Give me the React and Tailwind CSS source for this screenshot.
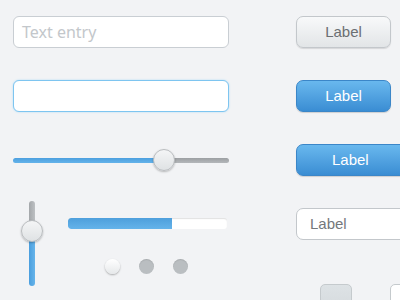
export default function App() {
  const font = { fontFamily: '"Liberation Sans", Arial, sans-serif' };
  return (
    <div className="w-[400px] h-[300px] overflow-hidden bg-[#f2f3f5] flex" style={font}>
      {/* Left column */}
      <div className="ml-[13px] w-[216px] shrink-0 flex flex-col">
        <div className="shrink-0 mt-[16px] h-[32px] rounded-[6px] border border-[#c9ced3] bg-white flex items-center pl-[8px] text-[16px] text-[#c3c7cb]" style={{ fontFamily: '"Noto Sans", "Liberation Sans", sans-serif' }}>
          Text entry
        </div>
        <div className="shrink-0 mt-[32px] h-[32px] rounded-[6px] border border-[#7ec5f0] bg-white shadow-[0_0_2px_#a9d9f7]"></div>
        {/* horizontal slider */}
        <div className="shrink-0 mt-[37px] h-[22px] relative flex items-center">
          <div className="flex w-full h-[5px] rounded-full overflow-hidden">
            <div className="w-[151px] bg-gradient-to-b from-[#4c9fdf] to-[#64b3ea]"></div>
            <div className="flex-1 bg-gradient-to-b from-[#9c9fa2] to-[#b4b7ba]"></div>
          </div>
          <div className="absolute left-[140px] top-0 w-[22px] h-[22px] rounded-full border border-[#b9bcbf] bg-gradient-to-b from-[#f4f5f6] to-[#dfe2e4] shadow-[0_1px_2px_rgba(0,0,0,0.25)]"></div>
        </div>
        {/* bottom */}
        <div className="shrink-0 mt-[30px] flex">
          <div className="ml-[8px] w-[22px] h-[85px] relative flex flex-col items-center">
            <div className="w-[6px] h-[22px] rounded-t-full bg-gradient-to-r from-[#a4a7aa] to-[#bdc0c3]"></div>
            <div className="w-[6px] flex-1 rounded-b-full bg-gradient-to-r from-[#4a9ede] to-[#66b4ea]"></div>
            <div className="absolute left-0 top-[19px] w-[22px] h-[22px] rounded-full border border-[#b9bcbf] bg-gradient-to-b from-[#f4f5f6] to-[#dfe2e4] shadow-[0_1px_2px_rgba(0,0,0,0.25)]"></div>
          </div>
          <div className="ml-[25px] flex-1 flex flex-col">
            <div className="mt-[17px] w-[159px] h-[11px] rounded-[3px] flex overflow-hidden bg-white shadow-[inset_0_1px_1px_rgba(0,0,0,0.12)]">
              <div className="w-[104px] bg-gradient-to-b from-[#4e9fdc] to-[#65b3ea] rounded-l-[3px]"></div>
            </div>
            <div className="mt-[30px] ml-[37px] flex gap-[19px]">
              <div className="w-[15px] h-[15px] rounded-full bg-gradient-to-b from-white to-[#e6e8ea] shadow-[0_1px_2px_rgba(0,0,0,0.3)]"></div>
              <div className="w-[15px] h-[15px] rounded-full bg-[#babec1] shadow-[inset_0_1px_1px_rgba(0,0,0,0.1)]"></div>
              <div className="w-[15px] h-[15px] rounded-full bg-[#babec1] shadow-[inset_0_1px_1px_rgba(0,0,0,0.1)]"></div>
            </div>
          </div>
        </div>
      </div>
      {/* Right column */}
      <div className="ml-[67px] flex flex-col shrink-0">
        <div className="shrink-0 mt-[16px] w-[95px] h-[32px] rounded-[7px] border border-[#c3c7cb] bg-gradient-to-b from-[#f8f9fa] to-[#e2e5e7] shadow-[0_1px_1px_rgba(0,0,0,0.12)] flex items-center justify-center text-[15px] text-[#6b6f73]">
          Label
        </div>
        <div className="shrink-0 mt-[32px] w-[95px] h-[32px] rounded-[7px] border border-[#3b86c8] bg-gradient-to-b from-[#69b8ee] to-[#3a8dd3] shadow-[0_1px_1px_rgba(0,0,0,0.15)] flex items-center justify-center text-[15px] text-white">
          Label
        </div>
        <div className="shrink-0 mt-[32px] w-[120px] h-[32px] rounded-[7px] border border-[#3b86c8] bg-gradient-to-b from-[#69b8ee] to-[#3a8dd3] shadow-[0_1px_1px_rgba(0,0,0,0.15)] flex items-center pl-[35px] text-[15px] text-white">
          Label
        </div>
        <div className="shrink-0 mt-[32px] w-[120px] h-[32px] rounded-[7px] border border-[#c3c7cb] bg-white flex items-center pl-[13px] text-[15px] text-[#74787c]">
          Label
        </div>
        <div className="shrink-0 mt-[44px] flex">
          <div className="shrink-0 ml-[24px] w-[32px] h-[32px] rounded-[5px] border border-[#c5cacd] bg-gradient-to-b from-[#dde2e5] to-[#d4d9dc]"></div>
          <div className="shrink-0 ml-[38px] w-[32px] h-[32px] rounded-[5px] border border-[#c5cacd] bg-white"></div>
        </div>
      </div>
    </div>
  );
}
